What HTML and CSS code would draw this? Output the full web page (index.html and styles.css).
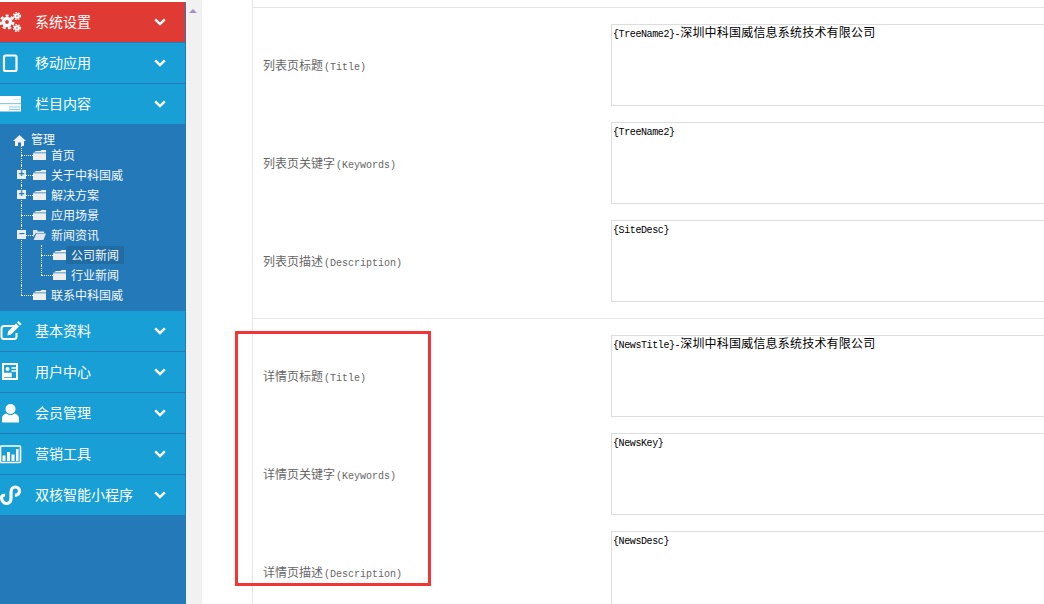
FILE: index.html
```html
<!DOCTYPE html>
<html lang="zh-CN">
<head>
<meta charset="UTF-8">
<title>栏目内容</title>
<link rel="stylesheet" href="styles.css">
</head>

<body>

<aside class="sidebar">
  <div class="menu-item active">
    <svg class="icon" viewBox="0 0 22 22">
      <circle cx="7" cy="11" r="3.6" fill="none" stroke="#fff" stroke-width="3.400"/>
      <circle cx="7" cy="11" r="6.400" fill="none" stroke="#fff" stroke-width="2.200" stroke-dasharray="3 2.600"/>
      <circle cx="17" cy="5" r="1.800" fill="none" stroke="#fff" stroke-width="2"/>
      <circle cx="17" cy="5" r="3.400" fill="none" stroke="#fff" stroke-width="1.400" stroke-dasharray="1.600 1.200"/>
      <circle cx="17" cy="17" r="1.800" fill="none" stroke="#fff" stroke-width="2"/>
      <circle cx="17" cy="17" r="3.400" fill="none" stroke="#fff" stroke-width="1.400" stroke-dasharray="1.600 1.200"/>
    </svg>
    <span class="menu-text">系统设置</span>
    <svg class="chevron" viewBox="0 0 12 8"><path d="M1.2 1.4 6 6 10.8 1.4" fill="none" stroke="#fff" stroke-width="2.4"/></svg>
  </div>
  <div class="menu-item">
    <svg class="icon" viewBox="0 0 22 22">
      <rect x="4" y="3.5" width="12.5" height="15.5" rx="1.5" fill="none" stroke="#fff" stroke-width="2.2"/>
    </svg>
    <span class="menu-text">移动应用</span>
    <svg class="chevron" viewBox="0 0 12 8"><path d="M1.2 1.4 6 6 10.8 1.4" fill="none" stroke="#fff" stroke-width="2.4"/></svg>
  </div>
  <div class="menu-item">
    <svg class="icon" viewBox="0 0 22 22">
      <rect x="0" y="3" width="21" height="7.500" fill="#fff"/>
      <rect x="0" y="11" width="21" height="7.500" fill="#fff"/>
      <path d="M0 10.700H21M9 14H20M9 16.500H20" stroke="#8ccbe9" stroke-width="1"/>
      <path d="M13 6.500H20" stroke="#cfe9f6" stroke-width="1"/>
    </svg>
    <span class="menu-text">栏目内容</span>
    <svg class="chevron" viewBox="0 0 12 8"><path d="M1.2 1.4 6 6 10.8 1.4" fill="none" stroke="#fff" stroke-width="2.4"/></svg>
  </div>

  <div class="tree">
    <div class="tree-root">
      <svg class="home" viewBox="0 0 13 11"><path d="M6.5 0 13 6H11V11H8V7.5H5V11H2V6H0Z" fill="#f2f2f2"/></svg>
      <span>管理</span>
    </div>
    <ul class="tree-list">
      <li>
        <div class="node"><i class="conn"></i>
          <svg class="folder" viewBox="0 0 13 10"><path d="M0 3 3 1H7.5L8.5 0H13V2.5H0ZM0 3.3H13V10H0Z" fill="#eeeeee"/></svg>
          <span class="node-text">首页</span></div>
      </li>
      <li>
        <b class="toggle">+</b>
        <div class="node"><i class="conn"></i>
          <svg class="folder" viewBox="0 0 13 10"><path d="M0 3 3 1H7.5L8.5 0H13V2.5H0ZM0 3.3H13V10H0Z" fill="#eeeeee"/></svg>
          <span class="node-text">关于中科国威</span></div>
      </li>
      <li>
        <b class="toggle">+</b>
        <div class="node"><i class="conn"></i>
          <svg class="folder" viewBox="0 0 13 10"><path d="M0 3 3 1H7.5L8.5 0H13V2.5H0ZM0 3.3H13V10H0Z" fill="#eeeeee"/></svg>
          <span class="node-text">解决方案</span></div>
      </li>
      <li>
        <div class="node"><i class="conn"></i>
          <svg class="folder" viewBox="0 0 13 10"><path d="M0 3 3 1H7.5L8.5 0H13V2.5H0ZM0 3.3H13V10H0Z" fill="#eeeeee"/></svg>
          <span class="node-text">应用场景</span></div>
      </li>
      <li>
        <b class="toggle">−</b>
        <div class="node"><i class="conn"></i>
          <svg class="folder" viewBox="0 0 13 10"><path d="M0 0H4L5 1.5H11V3H3L0 7ZM3.5 3.6H13L10.5 10H0.5Z" fill="#dfe6ee"/></svg>
          <span class="node-text">新闻资讯</span></div>
        <ul class="tree-list sub">
          <li>
            <div class="node"><i class="conn"></i>
              <svg class="folder" viewBox="0 0 13 10"><path d="M0 3 3 1H7.5L8.5 0H13V2.5H0ZM0 3.3H13V10H0Z" fill="#eeeeee"/></svg>
              <span class="node-text selected">公司新闻</span></div>
          </li>
          <li>
            <div class="node"><i class="conn"></i>
              <svg class="folder" viewBox="0 0 13 10"><path d="M0 3 3 1H7.5L8.5 0H13V2.5H0ZM0 3.3H13V10H0Z" fill="#eeeeee"/></svg>
              <span class="node-text">行业新闻</span></div>
          </li>
        </ul>
      </li>
      <li>
        <div class="node"><i class="conn"></i>
          <svg class="folder" viewBox="0 0 13 10"><path d="M0 3 3 1H7.5L8.5 0H13V2.5H0ZM0 3.3H13V10H0Z" fill="#eeeeee"/></svg>
          <span class="node-text">联系中科国威</span></div>
      </li>
    </ul>
  </div>

  <div class="menu-item">
    <svg class="icon" viewBox="0 0 22 22">
      <path d="M15 6H4a2.5 2.5 0 0 0-2.500 2.500v8A2.500 2.500 0 0 0 4 19h10a2.500 2.500 0 0 0 2.500-2.500V13" fill="none" stroke="#fff" stroke-width="2"/>
      <path d="M8 11.500 16 3.500 19 6.500 11 14.500 7.500 15.500ZM17 2.500 18.500 1 21.500 4 20 5.500Z" fill="#fff"/>
    </svg>
    <span class="menu-text">基本资料</span>
    <svg class="chevron" viewBox="0 0 12 8"><path d="M1.2 1.4 6 6 10.8 1.4" fill="none" stroke="#fff" stroke-width="2.4"/></svg>
  </div>
  <div class="menu-item">
    <svg class="icon" viewBox="0 0 22 22">
      <rect x="3" y="3" width="14" height="15" fill="none" stroke="#fff" stroke-width="2"/>
      <circle cx="7.500" cy="8" r="2" fill="#fff"/>
      <path d="M4 15.500V12.500H11V15.500ZM11.500 7H16M11.500 10H16" fill="#fff" stroke="#fff" stroke-width="1.400"/>
    </svg>
    <span class="menu-text">用户中心</span>
    <svg class="chevron" viewBox="0 0 12 8"><path d="M1.2 1.4 6 6 10.8 1.4" fill="none" stroke="#fff" stroke-width="2.4"/></svg>
  </div>
  <div class="menu-item">
    <svg class="icon" viewBox="0 0 22 22">
      <circle cx="10.500" cy="7" r="5" fill="#fff"/>
      <path d="M2 20V16.500C2 13.500 4.500 12 6.500 11.500 9 13.500 12 13.500 14.500 11.500 16.500 12 19 13.500 19 16.500V20Q19 20.500 17 20.500H4Q2 20.500 2 20Z" fill="#fff"/>
    </svg>
    <span class="menu-text">会员管理</span>
    <svg class="chevron" viewBox="0 0 12 8"><path d="M1.2 1.4 6 6 10.8 1.4" fill="none" stroke="#fff" stroke-width="2.4"/></svg>
  </div>
  <div class="menu-item">
    <svg class="icon" viewBox="0 0 22 22">
      <rect x="0.500" y="3" width="20" height="16.500" rx="1" fill="none" stroke="#fff" stroke-width="1.600"/>
      <path d="M2.500 12.500H5.500V18H2.500ZM7 9H10V18H7ZM11.500 11.500H14.500V18H11.500ZM16 6H18.500V18H16Z" fill="#fff"/>
    </svg>
    <span class="menu-text">营销工具</span>
    <svg class="chevron" viewBox="0 0 12 8"><path d="M1.2 1.4 6 6 10.8 1.4" fill="none" stroke="#fff" stroke-width="2.4"/></svg>
  </div>
  <div class="menu-item">
    <svg class="icon" viewBox="0 0 22 22">
      <path d="M1.500 12.500C1.500 17 4 19.500 6.500 19.500 9.500 19.500 11 17 11 14.500V8C11 5 13 3 15.500 3 18 3 19.500 5 19.500 7 19.500 9.500 17.500 11.500 15 11" fill="none" stroke="#fff" stroke-width="3.200"/>
      <path d="M1.500 13C2 11.500 3.500 11 5 11.200" fill="none" stroke="#fff" stroke-width="3"/>
    </svg>
    <span class="menu-text">双核智能小程序</span>
    <svg class="chevron" viewBox="0 0 12 8"><path d="M1.2 1.4 6 6 10.8 1.4" fill="none" stroke="#fff" stroke-width="2.4"/></svg>
  </div>
</aside>

<div class="scroll-strip"><span class="scroll-up"></span></div>

<main class="content">
  <section class="group">
    <div class="row">
      <label class="row-label">列表页标题<span class="en">(Title)</span></label>
      <div class="field"><span class="en">{TreeName2}-</span>深圳中科国威信息系统技术有限公司</div>
    </div>
    <div class="row">
      <label class="row-label">列表页关键字<span class="en">(Keywords)</span></label>
      <div class="field"><span class="en">{TreeName2}</span></div>
    </div>
    <div class="row">
      <label class="row-label">列表页描述<span class="en">(Description)</span></label>
      <div class="field"><span class="en">{SiteDesc}</span></div>
    </div>
  </section>
  <section class="group">
    <div class="row">
      <label class="row-label">详情页标题<span class="en">(Title)</span></label>
      <div class="field"><span class="en">{NewsTitle}-</span>深圳中科国威信息系统技术有限公司</div>
    </div>
    <div class="row">
      <label class="row-label">详情页关键字<span class="en">(Keywords)</span></label>
      <div class="field"><span class="en">{NewsKey}</span></div>
    </div>
    <div class="row">
      <label class="row-label">详情页描述<span class="en">(Description)</span></label>
      <div class="field"><span class="en">{NewsDesc}</span></div>
    </div>
  </section>
</main>

<div class="red-box"></div>

</body>
</html>
```

FILE: styles.css
```css
html, body {
  height: 100%;
}
body {
  margin: 0;
  display: flex;
  overflow: hidden;
  background-color: #fff;
  font-family: "Noto Sans CJK SC", "Liberation Sans", sans-serif;
}
.sidebar {
  flex: none;
  width: 185px;
  margin-top: 2px;
  background-color: #2479b8;
  border-right: 1px solid #2479b8;
}
.menu-item {
  display: flex;
  align-items: center;
  height: 40px;
  background-color: #18a0d6;
  border-bottom: 1px solid #2479b8;
  color: #fff;
  font-size: 14px;
}
.menu-item.active {
  background-color: #e03a34;
}
.icon {
  flex: none;
  width: 22px;
  height: 22px;
  margin-right: 13px;
}
.menu-text {
  flex: 1;
  padding-bottom: 2px;
}
.chevron {
  flex: none;
  width: 12px;
  height: 8px;
  margin-right: 19px;
}

.tree {
  padding: 6px 0;
  color: #f4f8fb;
  font-size: 12px;
}
.tree-root {
  display: flex;
  align-items: center;
  height: 16px;
  padding-left: 13px;
}
.tree-root span {
  padding-bottom: 2px;
}
.home {
  width: 13px;
  height: 11px;
  margin: 2px 5px 0 0;
}
.tree-list {
  list-style: none;
  margin: -2px 0 0;
  padding: 0 0 0 21px;
}
.tree-list.sub {
  margin: 0;
  padding-left: 20px;
}
.tree-list li {
  position: relative;
}
.tree-list li::before {
  content: "";
  position: absolute;
  left: 0;
  top: 0;
  bottom: 0;
  border-left: 1px dotted #fff;
}
.tree-list li:last-child::before {
  bottom: auto;
  height: 10px;
}
.node {
  display: flex;
  align-items: center;
  height: 20px;
}
.conn {
  flex: none;
  width: 12px;
  border-top: 1px dotted #fff;
}
.folder {
  flex: none;
  width: 13px;
  height: 10px;
}
.node-text {
  padding: 0 5px;
  line-height: 18px;
}
.node-text.selected {
  background-color: #216ca3;
}
.toggle {
  position: absolute;
  left: -4px;
  top: 5px;
  z-index: 1;
  width: 9px;
  height: 9px;
  background-color: #e8eef3;
  color: #2479b8;
  font: bold 10px/9px "Liberation Mono", monospace;
  text-align: center;
}

.scroll-strip {
  flex: none;
  width: 16px;
  background-color: #f1f1f1;
}
.scroll-up {
  display: block;
  width: 0;
  margin: 9px 0 0 3px;
  border-left: 4px solid transparent;
  border-right: 4px solid transparent;
  border-bottom: 4px solid #a58fc4;
}

.content {
  flex: 1;
  min-width: 0;
  margin-left: 50px;
  padding-top: 7px;
  border-left: 1px solid #e5e5e5;
  overflow: hidden;
}
.group {
  display: flex;
  flex-direction: column;
  gap: 16px;
  padding: 16px 0;
  border-top: 1px solid #e5e5e5;
}
.row {
  display: flex;
  align-items: center;
}
.row-label {
  flex: none;
  width: 358px;
  padding: 0 0 2px 10px;
  box-sizing: border-box;
  color: #666;
  font-size: 12px;
}
.row-label .en {
  margin-left: 1px;
}
.field {
  flex: none;
  box-sizing: border-box;
  width: 520px;
  height: 82px;
  padding: 0 1px;
  border: 1px solid #ddd;
  color: #000;
  font-size: 12px;
  line-height: 14px;
  letter-spacing: 0.2px;
}
.field .en {
  letter-spacing: -0.4px;
}
.en {
  font-family: "Liberation Mono", monospace;
  font-size: 10px;
}

.red-box {
  position: absolute;
  left: 235px;
  top: 331px;
  width: 190px;
  height: 249px;
  border: 3px solid #f33535;
}
```
